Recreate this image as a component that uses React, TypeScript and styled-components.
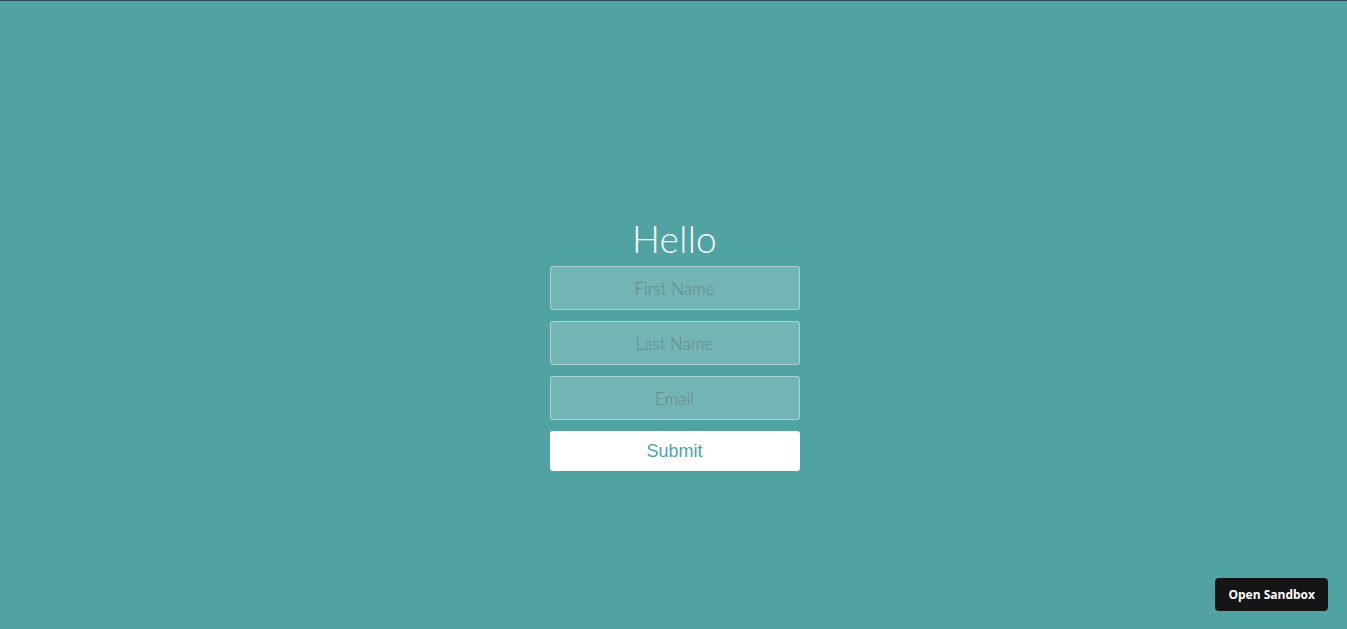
import styled, { createGlobalStyle } from "styled-components";

const GlobalStyle = createGlobalStyle`
  html, body {
    margin: 0;
    padding: 0;
    height: 100%;
  }
  body {
    background: #50a3a2;
    border-top: 1px solid #2c4a5c;
    box-sizing: border-box;
    font-family: "Lato", "Open Sans", sans-serif;
    font-weight: 300;
    overflow: hidden;
  }
`;

const Wrapper = styled.div`
  height: 628px;
  display: flex;
  flex-direction: column;
  align-items: center;
  padding: 215px 0 0 2px;
  box-sizing: border-box;
`;

const Title = styled.h1`
  margin: 0 0 4px;
  font-size: 37px;
  font-weight: 300;
  line-height: 46px;
  color: #fff;
  letter-spacing: 0.3px;
`;

const Form = styled.form`
  display: flex;
  flex-direction: column;
  gap: 11px;
  width: 250px;
`;

const Field = styled.input`
  box-sizing: border-box;
  width: 250px;
  height: 44px;
  padding: 10px 15px;
  border: 1px solid rgba(255, 255, 255, 0.4);
  background: rgba(255, 255, 255, 0.2);
  border-radius: 3px;
  font-family: "Lato", "Open Sans", sans-serif;
  font-weight: 300;
  font-size: 17px;
  text-align: center;
  color: #fff;
  outline: none;

  &::placeholder {
    color: #678686;
  }
`;

const SubmitButton = styled.button`
  height: 40px;
  width: 250px;
  border: 0;
  border-radius: 3px;
  background: #fff;
  color: #50a3a2;
  font-family: "Liberation Sans", Arial, sans-serif;
  font-size: 18px;
  cursor: pointer;
`;

const SandboxButton = styled.a`
  position: fixed;
  right: 19px;
  bottom: 18px;
  height: 33px;
  padding: 0 13px;
  display: flex;
  align-items: center;
  background: #151515;
  border-radius: 4px;
  color: #fff;
  font-family: "Open Sans", "Noto Sans", sans-serif;
  font-weight: 700;
  font-size: 12px;
  text-decoration: none;
`;

export default function App() {
  return (
    <>
      <GlobalStyle />
      <Wrapper>
        <Title>Hello</Title>
        <Form onSubmit={(e) => e.preventDefault()}>
          <Field type="text" placeholder="First Name" />
          <Field type="text" placeholder="Last Name" />
          <Field type="email" placeholder="Email" />
          <SubmitButton type="submit">Submit</SubmitButton>
        </Form>
      </Wrapper>
      <SandboxButton href="#">Open Sandbox</SandboxButton>
    </>
  );
}
